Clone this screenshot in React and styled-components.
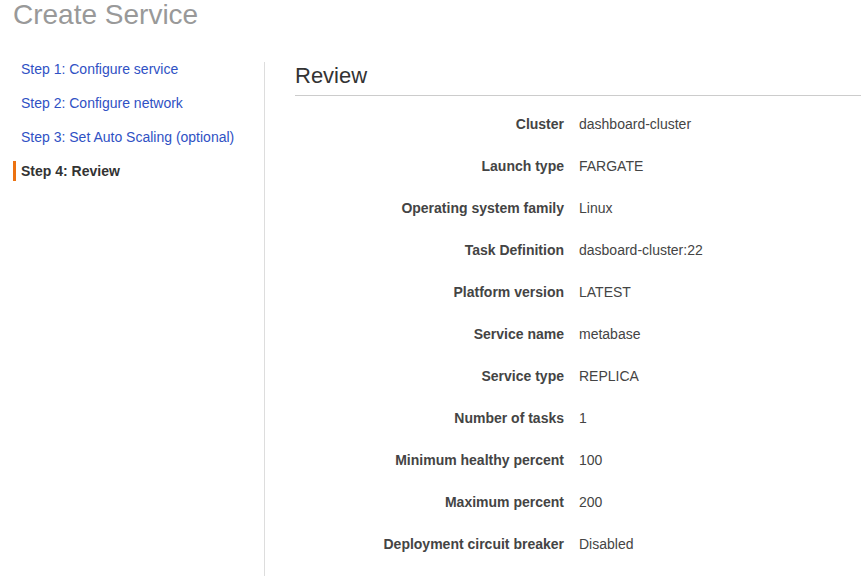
import styled, { createGlobalStyle } from "styled-components";

const GlobalStyle = createGlobalStyle`
  body {
    margin: 0;
    background: #fff;
    font-family: "Liberation Sans", Arial, sans-serif;
  }
`;

const Page = styled.div`
  width: 861px;
  height: 576px;
  overflow: hidden;
`;

const Title = styled.h1`
  margin: 0;
  padding: 0 0 0 13px;
  height: 32px;
  line-height: 30px;
  font-size: 28px;
  font-weight: 400;
  color: #999;
`;

const Layout = styled.div`
  display: flex;
  margin-top: 30px;
  height: 514px;
`;

const Sidebar = styled.nav`
  width: 264px;
  border-right: 1px solid #ddd;
  display: flex;
  flex-direction: column;
`;

const StepLink = styled.a`
  display: block;
  height: 34px;
  line-height: 14px;
  padding: 0 0 0 21px;
  font-size: 14px;
  color: ${(p) => (p.$active ? "#333" : "#2f51c4")};
  font-weight: ${(p) => (p.$active ? 700 : 400)};
  text-decoration: none;
  cursor: pointer;
  position: relative;
  &::before {
    content: "";
    display: ${(p) => (p.$active ? "block" : "none")};
    position: absolute;
    left: 13px;
    top: -3px;
    width: 3px;
    height: 20px;
    background: #ec7211;
  }
`;

const Main = styled.main`
  flex: 1;
  padding-left: 30px;
`;

const Heading = styled.h2`
  margin: 0;
  padding-top: 2px;
  height: 31px;
  line-height: 24px;
  font-size: 22px;
  font-weight: 400;
  color: #333;
  border-bottom: 1px solid #ccc;
`;

const Rows = styled.dl`
  margin: 0;
  padding-top: 20px;
  display: grid;
  grid-template-columns: 269px 1fr;
  column-gap: 15px;
  row-gap: 26px;
`;

const Label = styled.dt`
  text-align: right;
  font-size: 14px;
  line-height: 16px;
  font-weight: 700;
  color: #444;
`;

const Value = styled.dd`
  margin: 0;
  font-size: 14px;
  line-height: 16px;
  color: #444;
`;

const steps = [
  "Step 1: Configure service",
  "Step 2: Configure network",
  "Step 3: Set Auto Scaling (optional)",
  "Step 4: Review",
];

const details = [
  ["Cluster", "dashboard-cluster"],
  ["Launch type", "FARGATE"],
  ["Operating system family", "Linux"],
  ["Task Definition", "dasboard-cluster:22"],
  ["Platform version", "LATEST"],
  ["Service name", "metabase"],
  ["Service type", "REPLICA"],
  ["Number of tasks", "1"],
  ["Minimum healthy percent", "100"],
  ["Maximum percent", "200"],
  ["Deployment circuit breaker", "Disabled"],
];

export default function App() {
  return (
    <Page>
      <GlobalStyle />
      <Title>Create Service</Title>
      <Layout>
        <Sidebar>
          {steps.map((s, i) => (
            <StepLink key={s} $active={i === steps.length - 1}>
              {s}
            </StepLink>
          ))}
        </Sidebar>
        <Main>
          <Heading>Review</Heading>
          <Rows>
            {details.map(([k, v]) => [
              <Label key={k}>{k}</Label>,
              <Value key={k + "-v"}>{v}</Value>,
            ])}
          </Rows>
        </Main>
      </Layout>
    </Page>
  );
}
